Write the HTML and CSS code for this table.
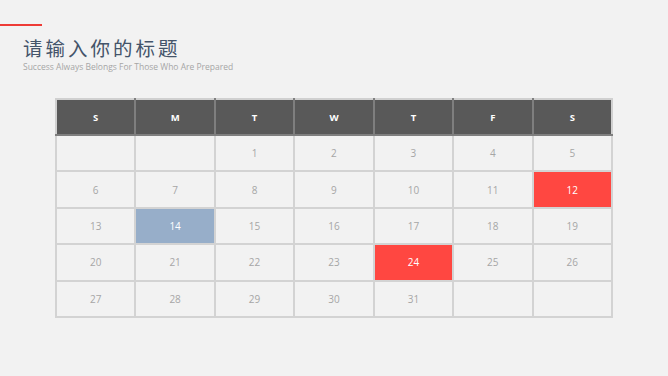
FILE: index.html
```html
<!DOCTYPE html>
<html>
<head>
<meta charset="utf-8">
<link rel="stylesheet" href="styles.css">
</head>
<body>
<div class="page">
  <div class="accent"></div>
  <header class="head">
    <h1 class="title">请输入你的标题</h1>
    <p class="subtitle">Success Always Belongs For Those Who Are Prepared</p>
  </header>
  <table class="cal">
    <thead>
      <tr><th>S</th><th>M</th><th>T</th><th>W</th><th>T</th><th>F</th><th>S</th></tr>
    </thead>
    <tbody>
      <tr><td></td><td></td><td>1</td><td>2</td><td>3</td><td>4</td><td>5</td></tr>
      <tr><td>6</td><td>7</td><td>8</td><td>9</td><td>10</td><td>11</td><td class="red">12</td></tr>
      <tr><td>13</td><td class="blue">14</td><td>15</td><td>16</td><td>17</td><td>18</td><td>19</td></tr>
      <tr><td>20</td><td>21</td><td>22</td><td>23</td><td class="red">24</td><td>25</td><td>26</td></tr>
      <tr><td>27</td><td>28</td><td>29</td><td>30</td><td>31</td><td></td><td></td></tr>
    </tbody>
  </table>
</div>
</body>
</html>
```
FILE: styles.css
```css
html, body {
  margin: 0;
  padding: 0;
  background: #f2f2f2;
}
.page {
  width: 668px;
  height: 376px;
  position: relative;
  overflow: hidden;
  font-family: "Open Sans", "Liberation Sans", sans-serif;
}
.accent {
  width: 42px;
  height: 2px;
  background: #ee3b36;
  margin-top: 24px;
}
.head {
  padding-left: 23px;
}
.title {
  margin: 10px 0 0 0;
  font-family: "Noto Sans CJK SC", "Noto Sans", sans-serif;
  font-weight: 400;
  font-size: 19.5px;
  line-height: 24px;
  letter-spacing: 3px;
  color: #44546a;
}
.subtitle {
  margin: 1px 0 0 0;
  font-size: 8.5px;
  line-height: 12px;
  color: #a6a6a6;
}
.cal {
  margin: 25px 0 0 55px;
  width: 558px;
  border-collapse: collapse;
  table-layout: fixed;
}
.cal th {
  height: 34px;
  background: #595959;
  color: #ffffff;
  font-size: 9.5px;
  font-weight: 700;
  border: 2px solid #7f7f7f;
  border-top-color: #d0d0d0;
  padding: 0;
}
.cal th:first-child { border-left-color: #d0d0d0; }
.cal th:last-child { border-right-color: #d0d0d0; }
.cal td {
  height: 34.4px;
  border: 2px solid #d3d3d3;
  background: #f2f2f2;
  color: #a6a6a6;
  font-size: 10px;
  text-align: center;
  padding: 0;
}
.cal td.red {
  background: #ff4741;
  color: #ffffff;
}
.cal td.blue {
  background: #97aec9;
  color: #ffffff;
}
```
